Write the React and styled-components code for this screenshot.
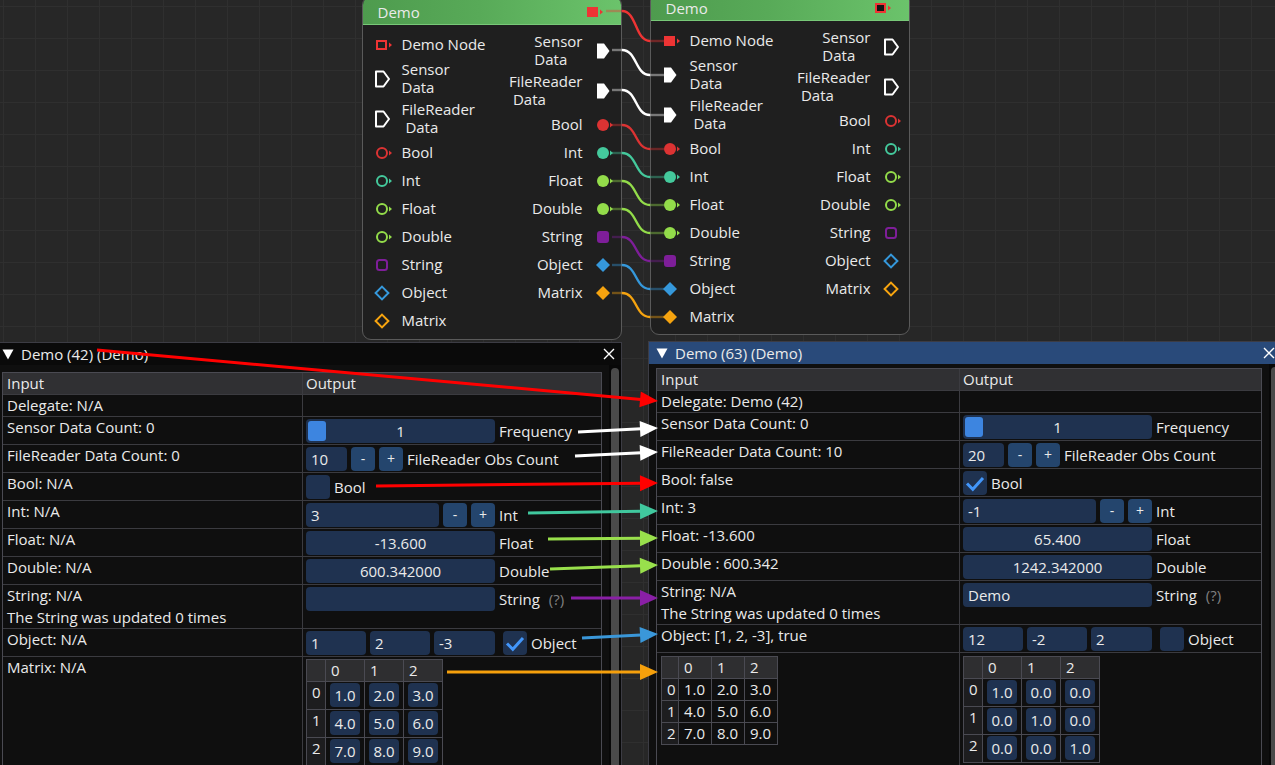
import React from 'react';
import styled, { createGlobalStyle } from 'styled-components';

const GlobalStyle = createGlobalStyle`
  html, body { margin: 0; padding: 0; background: #272727; }
  body {
    font-family: "Open Sans", "DejaVu Sans", sans-serif;
    font-size: 15px;
    color: #eaeaea;
  }
  * { box-sizing: border-box; }
`;

const PIN = {
  delegate: '#ee3434',
  flow: '#ffffff',
  bool: '#dc3333',
  int: '#44c99c',
  float: '#93dc4a',
  string: '#7e1e99',
  object: '#3598db',
  matrix: '#f5a30f',
};

// ---------- canvas / node editor ----------

const Canvas = styled.div`
  position: relative;
  width: 1275px;
  height: 765px;
  overflow: hidden;
  background-color: #272727;
  background-image: linear-gradient(to right, #2f2f2f 1px, transparent 1px),
    linear-gradient(to bottom, #2f2f2f 1px, transparent 1px);
  background-size: 32px 32px;
  background-position: 3px 6px;
`;

const NodeBox = styled.div`
  position: absolute;
  left: ${p => p.$x}px;
  top: ${p => p.$y}px;
  width: 260px;
  height: ${p => p.$h}px;
  background: #1f1f1f;
  border: 1.5px solid #5a5a5a;
  border-radius: 9px;
  overflow: hidden;
  display: flex;
  flex-direction: column;
  font-size: 15px;
`;

const NodeHeader = styled.div`
  height: 28px;
  flex: none;
  display: flex;
  align-items: center;
  justify-content: space-between;
  padding: 3px 16px 0 14.5px;
  background: linear-gradient(to right, #4e9b4e, #58aa58 45%, #6bc36b);
  border-bottom: 1px solid #78c878;
`;

const HeaderTitle = styled.span`
  line-height: 14px;
  padding-bottom: 1px;
`;

const NodeBody = styled.div`
  display: flex;
  justify-content: space-between;
  padding: 6px 6.5px 0 10.5px;
`;

const PinColumn = styled.div`
  display: flex;
  flex-direction: column;
  align-items: ${p => (p.$out ? 'flex-end' : 'flex-start')};
`;

const PinRow = styled.div`
  height: ${p => p.$h}px;
  display: flex;
  align-items: center;
  gap: ${p => (p.$out ? 12 : 8)}px;
`;

const PinText = styled.span`
  white-space: pre;
  line-height: 18px;
  padding-bottom: 2px;
`;

function Arrowhead({ color }) {
  return <polygon points="15,6.5 18,9 15,11.5" fill={color} />;
}

function PinIcon({ kind, filled, inner = 'none' }) {
  const c = PIN[kind];
  let shape;
  if (kind === 'delegate') {
    shape = filled ? (
      <rect x="2" y="4" width="11" height="10" fill={c} />
    ) : (
      <rect x="3" y="5" width="9" height="8" fill={inner} stroke={c} strokeWidth={2} />
    );
  } else if (kind === 'flow') {
    shape = filled ? (
      <polygon points="2,1.5 9,1.5 14.5,9 9,16.5 2,16.5" fill={c} />
    ) : (
      <polygon points="2,1.5 9.5,1.5 15,9 9.5,16.5 2,16.5" fill="none" stroke={c} strokeWidth={2} strokeLinejoin="round" />
    );
  } else if (kind === 'string') {
    shape = filled ? (
      <rect x="2" y="3" width="12" height="12" rx="3" fill={c} />
    ) : (
      <rect x="3" y="4" width="10" height="10" rx="2.5" fill="none" stroke={c} strokeWidth={2} />
    );
  } else if (kind === 'object' || kind === 'matrix') {
    shape = filled ? (
      <polygon points="8,2 15,9 8,16 1,9" fill={c} />
    ) : (
      <polygon points="8,2.6 14.4,9 8,15.4 1.6,9" fill="none" stroke={c} strokeWidth={2} />
    );
  } else {
    shape = filled ? (
      <circle cx="8" cy="9" r="6" fill={c} />
    ) : (
      <circle cx="8" cy="9" r="5" fill="none" stroke={c} strokeWidth={2} />
    );
  }
  const arrow = ['delegate', 'bool', 'int', 'float'].includes(kind);
  return (
    <svg width="20" height="18" viewBox="0 0 20 18" style={{ flex: 'none' }}>
      {shape}
      {arrow && <Arrowhead color={c} />}
    </svg>
  );
}

const inputPins = [
  { label: 'Demo Node', kind: 'delegate', h: 28 },
  { label: 'Sensor\nData', kind: 'flow', h: 40 },
  { label: 'FileReader\n Data', kind: 'flow', h: 40 },
  { label: 'Bool', kind: 'bool', h: 28 },
  { label: 'Int', kind: 'int', h: 28 },
  { label: 'Float', kind: 'float', h: 28 },
  { label: 'Double', kind: 'float', h: 28 },
  { label: 'String', kind: 'string', h: 28 },
  { label: 'Object', kind: 'object', h: 28 },
  { label: 'Matrix', kind: 'matrix', h: 28 },
];

const outputPins = inputPins.slice(1);

function DemoNode({ x, y, h, inputsFilled }) {
  return (
    <NodeBox $x={x} $y={y} $h={h}>
      <NodeHeader>
        <HeaderTitle>Demo</HeaderTitle>
        <PinIcon kind="delegate" filled={!inputsFilled} inner="#141414" />
      </NodeHeader>
      <NodeBody>
        <PinColumn>
          {inputPins.map(p => (
            <PinRow key={p.label} $h={p.h}>
              <PinIcon kind={p.kind} filled={inputsFilled} />
              <PinText>{p.label}</PinText>
            </PinRow>
          ))}
        </PinColumn>
        <PinColumn $out>
          {outputPins.map(p => (
            <PinRow key={p.label} $h={p.h} $out>
              <PinText>{p.label}</PinText>
              <PinIcon kind={p.kind} filled={!inputsFilled} />
            </PinRow>
          ))}
        </PinColumn>
      </NodeBody>
    </NodeBox>
  );
}

const Overlay = styled.svg`
  position: absolute;
  left: 0;
  top: 0;
  pointer-events: none;
  z-index: ${p => p.$z};
`;

function Link({ y1, y2, color, x1 = 612 }) {
  const a = 622;
  const b = 650;
  return (
    <g fill="none" stroke={color} strokeWidth={2.4}>
      <path d={`M${x1} ${y1} L${a} ${y1}`} opacity={0.4} />
      <path d={`M${a} ${y1} C${a + 15} ${y1} ${b - 15} ${y2} ${b} ${y2}`} />
      <path d={`M${b} ${y2} L664 ${y2}`} opacity={0.4} />
    </g>
  );
}

const links = [
  { y1: 11, y2: 41, color: PIN.delegate, x1: 606 },
  { y1: 50, y2: 75, color: '#ffffff' },
  { y1: 90, y2: 115, color: '#ffffff' },
  { y1: 125, y2: 149, color: PIN.bool },
  { y1: 153, y2: 177, color: PIN.int },
  { y1: 181, y2: 205, color: PIN.float },
  { y1: 209, y2: 233, color: PIN.float },
  { y1: 237, y2: 261, color: PIN.string },
  { y1: 265, y2: 289, color: PIN.object },
  { y1: 293, y2: 317, color: PIN.matrix },
];

// ---------- property windows ----------

const Window = styled.div`
  position: absolute;
  left: ${p => p.$x}px;
  top: ${p => p.$y}px;
  width: ${p => p.$w}px;
  height: 440px;
  background: #0f0f0f;
  border: 1px solid #3c3c44;
  display: flex;
  flex-direction: column;
  z-index: 3;
`;

const TitleBar = styled.div`
  height: 22px;
  flex: none;
  display: flex;
  align-items: center;
  gap: 7px;
  padding: 0 6px 0 7px;
  background: ${p => (p.$active ? '#294a7a' : '#0a0a0a')};
`;

const TitleText = styled.span`
  flex: 1;
  line-height: 18px;
  padding-bottom: 1px;
`;

const WindowBody = styled.div`
  flex: 1;
  display: flex;
  min-height: 0;
`;

const Content = styled.div`
  flex: 1;
  padding: ${p => p.$top}px 7px 0 7px;
  overflow: hidden;
`;

const ScrollTrack = styled.div`
  width: 12px;
  flex: none;
  background: #080808;
  padding: 3px 2px 0 2px;
`;

const ScrollThumb = styled.div`
  height: 100%;
  border-radius: 5px;
  background: #4a4a4a;
`;

const Table = styled.div`
  width: ${p => p.$w}px;
  border: 1px solid #4a4a52;
  border-bottom: none;
`;

const TRow = styled.div`
  display: grid;
  grid-template-columns: ${p => p.$split}px 1fr;
  height: ${p => p.$h}px;
  border-bottom: 1px solid #3b3b40;
  background: ${p => (p.$head ? '#303033' : 'transparent')};
`;

const TCell = styled.div`
  padding: 1px 4px 2px 4px;
  line-height: 18px;
  display: flex;
  flex-direction: column;
  gap: 4px;
  white-space: nowrap;
  & + & {
    border-left: 1px solid #3b3b40;
    padding: 2px 4px 2px 3px;
  }
`;

const WidgetRow = styled.div`
  display: flex;
  align-items: center;
  gap: 4px;
  height: 24px;
`;

const Frame = styled.div`
  position: relative;
  flex: none;
  width: ${p => p.$w}px;
  height: 24px;
  background: #1f3250;
  border-radius: 4px;
  display: flex;
  align-items: center;
  justify-content: ${p => (p.$center ? 'center' : 'flex-start')};
  padding: 0 5px;
  margin-left: ${p => p.$ml || 0}px;
`;

const Grab = styled.div`
  position: absolute;
  left: 2px;
  top: 2px;
  width: 18px;
  height: 20px;
  border-radius: 3px;
  background: #3d85e0;
`;

const SmallButton = styled.div`
  width: 24px;
  height: 24px;
  flex: none;
  border-radius: 4px;
  background: #24456d;
  display: flex;
  align-items: center;
  justify-content: center;
  font-size: 14px;
`;

const WLabel = styled.span`
  white-space: pre;
  line-height: 18px;
  color: ${p => (p.$muted ? '#808080' : '#eaeaea')};
  margin-left: ${p => p.$ml || 0}px;
`;

const MGrid = styled.div`
  display: grid;
  grid-template-columns: ${p => p.$lab}px repeat(3, ${p => p.$col}px);
  grid-template-rows: 22px;
  grid-auto-rows: ${p => p.$row}px;
  width: max-content;
  border-top: 1px solid #4a4a52;
  border-left: 1px solid #4a4a52;
  margin-top: ${p => p.$mt || 0}px;
`;

const MCell = styled.div`
  border-right: 1px solid #4a4a52;
  border-bottom: 1px solid #4a4a52;
  background: ${p => (p.$head ? '#2e2e30' : p.$side ? '#1d1d1f' : 'transparent')};
  padding: ${p => (p.$box ? '1px 0 0 4px' : '1px 0 0 5px')};
  line-height: 18px;
`;

const MBox = styled.div`
  width: 30px;
  height: 24px;
  border-radius: 4px;
  background: #1f3250;
  display: flex;
  align-items: center;
  justify-content: center;
`;

function Check({ on, ml }) {
  return (
    <Frame $w={24} $ml={ml} style={{ padding: 0 }}>
      {on && (
        <svg width="24" height="24" viewBox="0 0 24 24">
          <path d="M4 12.5 L9.8 18.3 L20 7" fill="none" stroke="#4296fa" strokeWidth="3" />
        </svg>
      )}
    </Frame>
  );
}

function Matrix({ values, boxes, lab, col, row, mt }) {
  return (
    <MGrid $lab={lab} $col={col} $row={row} $mt={mt}>
      <MCell $head />
      {['0', '1', '2'].map(h => (
        <MCell key={h} $head>{h}</MCell>
      ))}
      {values.map((r, i) => (
        <React.Fragment key={i}>
          <MCell $side>{i}</MCell>
          {r.map((v, j) =>
            boxes ? (
              <MCell key={j} $box>
                <MBox>{v}</MBox>
              </MCell>
            ) : (
              <MCell key={j}>{v}</MCell>
            )
          )}
        </React.Fragment>
      ))}
    </MGrid>
  );
}

function Triangle() {
  return (
    <svg width="12" height="11" viewBox="0 0 12 11" style={{ flex: 'none' }}>
      <polygon points="0.5,0.5 11.5,0.5 6,10.5" fill="#ffffff" />
    </svg>
  );
}

function CloseX() {
  return (
    <svg width="12" height="12" viewBox="0 0 12 12" style={{ flex: 'none' }}>
      <path d="M1 1 L11 11 M11 1 L1 11" stroke="#ffffff" strokeWidth="1.4" />
    </svg>
  );
}

function PropWindow({ x, y, w, active, title, top, tableW, split, d }) {
  return (
    <Window $x={x} $y={y} $w={w}>
      <TitleBar $active={active}>
        <Triangle />
        <TitleText>{title}</TitleText>
        <CloseX />
      </TitleBar>
      <WindowBody>
        <Content $top={top}>
          <Table $w={tableW}>
            <TRow $split={split} $h={22} $head>
              <TCell>Input</TCell>
              <TCell style={{ paddingTop: 1 }}>Output</TCell>
            </TRow>
            <TRow $split={split} $h={22}>
              <TCell>{d.delegate}</TCell>
              <TCell />
            </TRow>
            <TRow $split={split} $h={28}>
              <TCell>Sensor Data Count: 0</TCell>
              <TCell>
                <WidgetRow>
                  <Frame $w={189} $center>
                    <Grab />
                    <span style={{ position: 'relative' }}>1</span>
                  </Frame>
                  <WLabel>Frequency</WLabel>
                </WidgetRow>
              </TCell>
            </TRow>
            <TRow $split={split} $h={28}>
              <TCell>{d.fileCount}</TCell>
              <TCell>
                <WidgetRow>
                  <Frame $w={41}>{d.obs}</Frame>
                  <SmallButton>-</SmallButton>
                  <SmallButton>+</SmallButton>
                  <WLabel>FileReader Obs Count</WLabel>
                </WidgetRow>
              </TCell>
            </TRow>
            <TRow $split={split} $h={28}>
              <TCell>{d.boolIn}</TCell>
              <TCell>
                <WidgetRow>
                  <Check on={d.bool} />
                  <WLabel>Bool</WLabel>
                </WidgetRow>
              </TCell>
            </TRow>
            <TRow $split={split} $h={28}>
              <TCell>{d.intIn}</TCell>
              <TCell>
                <WidgetRow>
                  <Frame $w={133}>{d.int}</Frame>
                  <SmallButton>-</SmallButton>
                  <SmallButton>+</SmallButton>
                  <WLabel>Int</WLabel>
                </WidgetRow>
              </TCell>
            </TRow>
            <TRow $split={split} $h={28}>
              <TCell>{d.floatIn}</TCell>
              <TCell>
                <WidgetRow>
                  <Frame $w={189} $center>{d.float}</Frame>
                  <WLabel>Float</WLabel>
                </WidgetRow>
              </TCell>
            </TRow>
            <TRow $split={split} $h={28}>
              <TCell>{d.doubleIn}</TCell>
              <TCell>
                <WidgetRow>
                  <Frame $w={189} $center>{d.double}</Frame>
                  <WLabel>Double</WLabel>
                </WidgetRow>
              </TCell>
            </TRow>
            <TRow $split={split} $h={44}>
              <TCell>
                <span>String: N/A</span>
                <span>The String was updated 0 times</span>
              </TCell>
              <TCell>
                <WidgetRow>
                  <Frame $w={189}>{d.str}</Frame>
                  <WLabel>String</WLabel>
                  <WLabel $muted $ml={5}>(?)</WLabel>
                </WidgetRow>
              </TCell>
            </TRow>
            <TRow $split={split} $h={28}>
              <TCell>{d.objIn}</TCell>
              <TCell>
                <WidgetRow>
                  <Frame $w={60}>{d.obj[0]}</Frame>
                  <Frame $w={60}>{d.obj[1]}</Frame>
                  <Frame $w={61}>{d.obj[2]}</Frame>
                  <Check on={d.objCheck} ml={4} />
                  <WLabel>Object</WLabel>
                </WidgetRow>
              </TCell>
            </TRow>
            <TRow $split={split} $h={120}>
              <TCell>
                {d.matrixIn ? (
                  <Matrix values={d.matrixIn} lab={17} col={33} row={22} mt={2} />
                ) : (
                  'Matrix: N/A'
                )}
              </TCell>
              <TCell>
                <Matrix values={d.matrix} boxes lab={19} col={39} row={28} mt={d.matrixIn ? 1 : 0} />
              </TCell>
            </TRow>
          </Table>
        </Content>
        <ScrollTrack>
          <ScrollThumb />
        </ScrollTrack>
      </WindowBody>
    </Window>
  );
}

const leftData = {
  delegate: 'Delegate: N/A',
  fileCount: 'FileReader Data Count: 0',
  obs: '10',
  boolIn: 'Bool: N/A',
  bool: false,
  intIn: 'Int: N/A',
  int: '3',
  floatIn: 'Float: N/A',
  float: '-13.600',
  doubleIn: 'Double: N/A',
  double: '600.342000',
  str: '',
  objIn: 'Object: N/A',
  obj: ['1', '2', '-3'],
  objCheck: true,
  matrixIn: null,
  matrix: [
    ['1.0', '2.0', '3.0'],
    ['4.0', '5.0', '6.0'],
    ['7.0', '8.0', '9.0'],
  ],
};

const rightData = {
  delegate: 'Delegate: Demo (42)',
  fileCount: 'FileReader Data Count: 10',
  obs: '20',
  boolIn: 'Bool: false',
  bool: true,
  intIn: 'Int: 3',
  int: '-1',
  floatIn: 'Float: -13.600',
  float: '65.400',
  doubleIn: 'Double : 600.342',
  double: '1242.342000',
  str: 'Demo',
  objIn: 'Object: [1, 2, -3], true',
  obj: ['12', '-2', '2'],
  objCheck: false,
  matrixIn: [
    ['1.0', '2.0', '3.0'],
    ['4.0', '5.0', '6.0'],
    ['7.0', '8.0', '9.0'],
  ],
  matrix: [
    ['1.0', '0.0', '0.0'],
    ['0.0', '1.0', '0.0'],
    ['0.0', '0.0', '1.0'],
  ],
};

// ---------- annotation arrows ----------

function Arrow({ x1, y1, x2, y2, color }) {
  const dx = x2 - x1;
  const dy = y2 - y1;
  const len = Math.hypot(dx, dy);
  const ux = dx / len;
  const uy = dy / len;
  const hl = 18;
  const hw = 8;
  const bx = x2 - ux * hl;
  const by = y2 - uy * hl;
  const pts = [
    [x2, y2],
    [bx - uy * hw, by + ux * hw],
    [bx + uy * hw, by - ux * hw],
  ]
    .map(p => p.join(','))
    .join(' ');
  return (
    <g>
      <line x1={x1} y1={y1} x2={bx + ux} y2={by + uy} stroke={color} strokeWidth={3} />
      <polygon points={pts} fill={color} />
    </g>
  );
}

const arrows = [
  { x1: 97, y1: 350, x2: 658, y2: 401, color: '#ff0000' },
  { x1: 578, y1: 432, x2: 658, y2: 428, color: '#ffffff' },
  { x1: 575, y1: 456, x2: 658, y2: 452, color: '#ffffff' },
  { x1: 376, y1: 486, x2: 658, y2: 483, color: '#ff0000' },
  { x1: 528, y1: 513, x2: 658, y2: 511, color: '#40c89e' },
  { x1: 548, y1: 539, x2: 658, y2: 538, color: '#99e04c' },
  { x1: 550, y1: 569, x2: 658, y2: 565, color: '#99e04c' },
  { x1: 571, y1: 598, x2: 658, y2: 598, color: '#8a1fa6' },
  { x1: 582, y1: 638, x2: 658, y2: 634, color: '#3a97d9' },
  { x1: 447, y1: 672, x2: 658, y2: 672, color: '#f5a00c' },
];

export default function App() {
  return (
    <>
      <GlobalStyle />
      <Canvas>
        <DemoNode x={362} y={-4} h={344} inputsFilled={false} />
        <DemoNode x={650} y={-8} h={343} inputsFilled />
        <Overlay $z={2} width="1275" height="345">
          {links.map((l, i) => (
            <Link key={i} {...l} />
          ))}
        </Overlay>
        <PropWindow
          x={-6}
          y={342}
          w={628}
          title="Demo (42) (Demo)"
          top={7}
          tableW={600}
          split={299}
          d={leftData}
        />
        <PropWindow
          x={648}
          y={341}
          w={634}
          active
          title="Demo (63) (Demo)"
          top={4}
          tableW={606}
          split={302}
          d={rightData}
        />
        <Overlay $z={5} width="1275" height="765">
          {arrows.map((a, i) => (
            <Arrow key={i} {...a} />
          ))}
        </Overlay>
      </Canvas>
    </>
  );
}
